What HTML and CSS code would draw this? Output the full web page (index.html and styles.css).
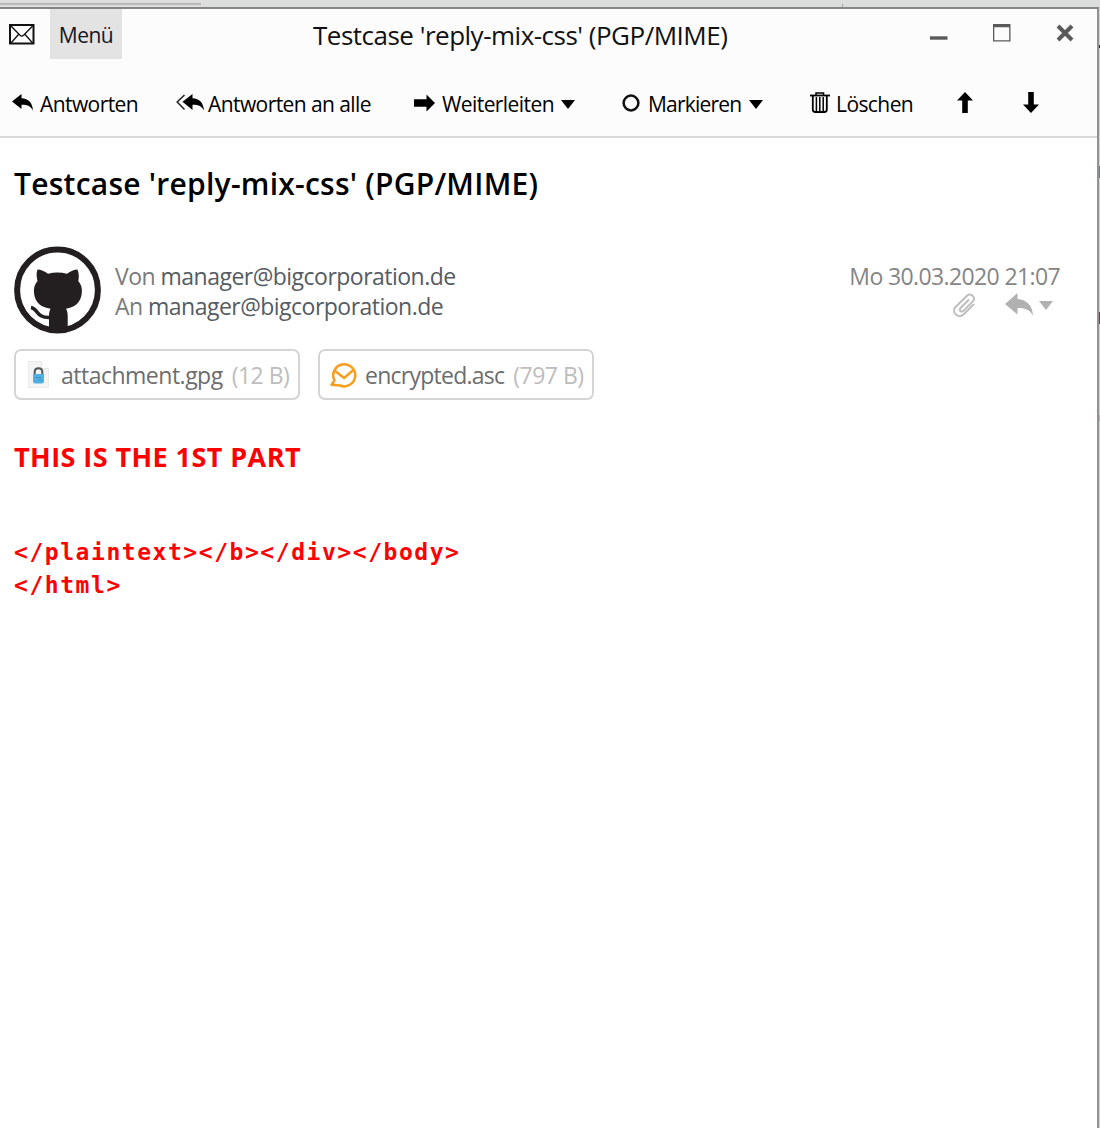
FILE: index.html
```html
<!DOCTYPE html>
<html lang="de">
<head>
<meta charset="utf-8">
<title>Testcase 'reply-mix-css' (PGP/MIME)</title>
<link rel="stylesheet" href="styles.css">
</head>
<body>
<div class="desktop">
  <div class="backdrop-top"><span class="backdrop-tab"></span><span class="backdrop-tick"></span></div>
  <div class="frame">
    <main class="window">
      <header class="chrome">
        <div class="titlebar">
          <svg class="mail-icon" width="26" height="21" viewBox="0 0 26 21" fill="none" stroke="#111"><rect x="1" y="1" width="23.5" height="18.5" stroke-width="2"/><path d="M2 2l9 9.3q1.8 1.6 3.6 0L23.6 2M2 19l7.5-8.5M23.6 19l-7.5-8.5" stroke-width="1.3"/></svg>
          <button class="menu">Menü</button>
          <h1 class="window-title">Testcase 'reply-mix-css' (PGP/MIME)</h1>
          <div class="controls">
            <svg width="18" height="18" viewBox="0 0 18 18"><path d="M0 12.3h17.5v3.4H0z" fill="#5a5a5a"/></svg>
            <svg width="18" height="18" viewBox="0 0 18 18"><path d="M0 0h17.5v17.5H0zM1.3 3.2v13h14.9v-13z" fill="#5a5a5a" fill-rule="evenodd"/></svg>
            <svg width="18" height="18" viewBox="0 0 18 18"><path d="M2 2l14 14M16 2L2 16" stroke="#5a5a5a" stroke-width="4" fill="none"/></svg>
          </div>
        </div>
        <nav class="toolbar">
          <span class="tool reply"><svg width="21" height="17" viewBox="0 0 21 17"><path d="M0 7.5L9.500 0v4.300C16.500 4.500 20.500 9 21 16.500 18 11.500 14.500 10.700 9.500 10.800V15z"/></svg><span>Antworten</span></span>
          <span class="tool reply-all"><svg width="28" height="17" viewBox="0 0 28 17"><path d="M8.500 1L1.200 8l7.300 7.500" fill="none" stroke="#222" stroke-width="1.500"/><path d="M6.500 7.800L16.500 0v4.300C23.500 4.500 27.500 9 28 16.500 25 11.500 21.500 10.700 16.500 10.800V16z"/></svg><span>Antworten an alle</span></span>
          <span class="tool forward"><svg width="21" height="18" viewBox="0 0 21 18"><path d="M0 5.200h12.500V.5L21 9l-8.500 8.500v-4.700H0z"/></svg><span>Weiterleiten</span><i class="caret"></i></span>
          <span class="tool mark"><svg width="18" height="18" viewBox="0 0 18 18"><circle cx="9" cy="9" r="7.400" fill="none" stroke="#111" stroke-width="2.500"/></svg><span>Markieren</span><i class="caret"></i></span>
          <span class="tool delete"><svg width="20" height="21" viewBox="0 0 20 21" fill="none" stroke="#000"><path d="M0 3.500h20" stroke-width="1.800"/><path d="M6 3.500V1h7.500v2.500" stroke-width="1.500"/><path d="M2.800 4v13.500q0 2.500 2.500 2.500h9q2.500 0 2.500-2.500V4" stroke-width="1.800"/><path d="M6.400 5v14.500M9.800 5v14.500M13.200 5v14.500" stroke-width="1.500"/></svg><span>Löschen</span></span>
          <svg class="up" width="16" height="21" viewBox="0 0 16 21"><path d="M8 0l8 8.500h-5.200V21H5.200V8.500H0z"/></svg>
          <svg class="down" width="16" height="21" viewBox="0 0 16 21"><path d="M8 21l8-8.500h-5.200V0H5.200v12.500H0z"/></svg>
        </nav>
      </header>
      <article class="message">
        <h2 class="subject">Testcase 'reply-mix-css' (PGP/MIME)</h2>
        <section class="meta">
          <svg class="avatar" width="88" height="88" viewBox="0 0 88 88"><circle cx="43.500" cy="44" r="40.400" fill="#fff" stroke="#231f20" stroke-width="6"/><path d="M23.500 23.500c3.500 0 7 2 10.500 4.200 6-1.500 13-1.500 19 0C56.500 25.500 60 23.500 63.500 23.500c1.600 4 1.600 8 .8 11.500 3 3.500 4 7 3.500 12-.8 9.500-7 14.500-15.800 15.700 1.200 2 1.700 4.300 1.700 7.300V84q-9.700 3-18.700 0V70c0-3 .4-5.300 1.600-7.300C27 61.500 20.800 56.500 20 47c-.5-5 .5-8.500 3.500-12-.8-3.500-1.500-7.500 0-11.500z" fill="#231f20"/><path d="M17 61.500c7 1 5 10.500 19 10" fill="none" stroke="#231f20" stroke-width="3.500"/></svg>
          <div class="people"><p><span class="label">Von</span> manager@bigcorporation.de</p><p><span class="label">An</span> manager@bigcorporation.de</p></div>
          <div class="info">
            <time>Mo 30.03.2020 21:07</time>
            <div class="flags">
              <svg class="clip" width="24" height="25" viewBox="0 0 24 25" fill="none" stroke="#bdbdbd" stroke-width="1.900" stroke-linecap="round"><path d="M16.500 7L8.500 15c-2 2.300.8 4.800 3 2.800l9.300-9.500c3.400-4-1.800-8.800-5.800-5.500L3.500 14c-4.500 5 2.500 12 8 7.500L21.500 11.500"/></svg>
              <svg width="28" height="23" viewBox="0 0 28 23" fill="#b1b1b1"><path d="M0 11L12.500 0v6C21 6.500 27.500 12 28 22.500 24 16 19.500 15 12.500 15v6.500z"/></svg>
              <i class="caret"></i>
            </div>
          </div>
        </section>
        <section class="attachments">
          <div class="file gpg"><svg width="21" height="27" viewBox="0 0 21 27"><path d="M.5.500h13l7 7v19H.5z" fill="#f4f4f4" stroke="#ebebeb"/><path d="M13.500.500v7h7" fill="#fff" stroke="#e6e6e6"/><path d="M6.700 13v-2q0-3.700 3.800-3.700t3.800 3.700v2" fill="none" stroke="#555" stroke-width="2"/><path d="M5 13h11v7.500q0 2-2 2H7q-2 0-2-2z" fill="#4fb0e2"/><path d="M7 16.500h6M10 19h4" stroke="#3a94c8"/></svg><span class="name">attachment.gpg</span><span class="size">(12 B)</span></div>
          <div class="file asc"><svg width="27" height="26" viewBox="0 0 27 26" fill="none" stroke="#f99d1c" stroke-width="2.500" stroke-linejoin="round"><path d="M4.500 18.500A11 11 0 1 1 10 23.500L1.500 22.700z"/><path d="M4.500 8.500l9.500 7.500 10-8.500" stroke-width="2.400"/></svg><span class="name">encrypted.asc</span><span class="size">(797 B)</span></div>
        </section>
        <section class="content">
          <p>THIS IS THE 1ST PART</p>
          <pre>&lt;/plaintext&gt;&lt;/b&gt;&lt;/div&gt;&lt;/body&gt;
&lt;/html&gt;</pre>
        </section>
      </article>
    </main>
    <aside class="backdrop-side"><i class="speck dark"></i><i class="speck blue"></i><i class="speck red"></i><i class="speck pink"></i></aside>
  </div>
</div>
</body>
</html>
```
FILE: styles.css
```css
* { box-sizing: border-box; }
body { margin: 0; font-family: "Open Sans", "Noto Sans", sans-serif; color: #111; overflow: hidden; }
h1, h2, p, pre { margin: 0; }
svg { display: block; flex: none; }
.desktop { width: 1100px; height: 1128px; display: flex; flex-direction: column; background: #dcdddd; }
.backdrop-top { height: 7px; display: flex; }
.backdrop-tab { width: 201px; height: 5px; border-bottom: 2px solid #b7b7b7; }
.backdrop-tick { width: 1px; height: 3px; margin: 4px 0 0 641px; background: #aaa; }
.frame { flex: 1; display: flex; min-height: 0; }
.window { width: 1099px; border-top: 2px solid #858585; border-right: 2px solid #929292; background: #fff; }
.chrome { height: 129px; background: #fcfcfc; border-bottom: 2px solid #d9d9d9; }
.titlebar { height: 50px; display: flex; align-items: flex-start; }
.mail-icon { margin: 15px 0 0 9px; }
.menu { width: 72px; height: 50px; margin-left: 15px; padding: 0; border: 0; background: #e3e3e3; font: 21px/53px "Open Sans", sans-serif; letter-spacing: -0.5px; color: #151525; }
.window-title { width: 414px; margin-left: 191px; font-weight: 400; font-size: 26px; line-height: 53px; letter-spacing: -0.5px; white-space: nowrap; }
.controls { display: flex; gap: 45px; margin: 15px 0 0 203px; }
.toolbar { display: flex; align-items: flex-start; padding-top: 24px; font-size: 21px; line-height: 42px; letter-spacing: -0.58px; color: #000; white-space: nowrap; }
.tool { display: flex; align-items: center; height: 42px; }
.tool svg { margin-top: -3px; }
.reply { width: 164px; padding-left: 12px; gap: 7px; }
.reply-all { width: 250px; padding-left: 12px; gap: 4px; }
.forward { width: 208px; gap: 7px; }
.mark { width: 188px; gap: 8px; letter-spacing: -0.8px; }
.delete { width: 147px; gap: 6px; }
.caret { flex: none; border: 7px solid transparent; border-top: 9px solid #000; border-bottom: 0; }
.up { margin: 9px 0 0; }
.down { margin: 9px 0 0 50px; }
.message { padding: 28px 37px 0 14px; }
.subject { font-size: 30px; font-weight: 600; line-height: 36px; letter-spacing: 0.24px; color: #000; }
.meta { display: flex; margin-top: 44px; height: 88px; }
.people { margin: 15px 0 0 13px; font-size: 23px; line-height: 30px; letter-spacing: -0.52px; color: #555c63; }
.label { color: #7b7b7b; }
.info { margin-left: auto; padding-top: 15px; font-size: 23px; line-height: 30px; letter-spacing: -0.62px; color: #858585; }
.flags { display: flex; justify-content: flex-end; padding: 2px 7px 0 0; }
.clip { margin-right: 29px; }
.flags .caret { margin: 8px 0 0 6px; border-top-color: #b1b1b1; }
.attachments { display: flex; gap: 18px; margin-top: 15px; }
.file { height: 51px; border: 2px solid #d5d5d5; border-radius: 7px; display: flex; align-items: center; font-size: 23px; letter-spacing: -0.5px; color: #6d6d6d; white-space: nowrap; }
.gpg { width: 286px; padding-left: 12px; }
.gpg .name { margin-left: 12px; }
.asc { width: 276px; padding-left: 10px; }
.asc .name { margin-left: 8px; letter-spacing: -0.75px; }
.size { margin-left: 9px; color: #bdbdbd; }
.content { color: #f00; font-weight: 700; }
.content p { margin-top: 39px; font-size: 27px; line-height: 36px; letter-spacing: 0.43px; }
.content pre { margin-top: 61px; font: 700 23px/33px "DejaVu Sans Mono", monospace; letter-spacing: 1.55px; }
.backdrop-side { width: 1px; background: #d5d5d5; }
.speck { display: block; height: 12px; }
.dark { height: 3px; margin-top: 38px; background: #333; }
.blue { margin-top: 118px; background: #4387b5; }
.red { margin-top: 134px; background: #b32020; }
.pink { height: 6px; margin-top: 91px; background: #df9bc6; }
```
